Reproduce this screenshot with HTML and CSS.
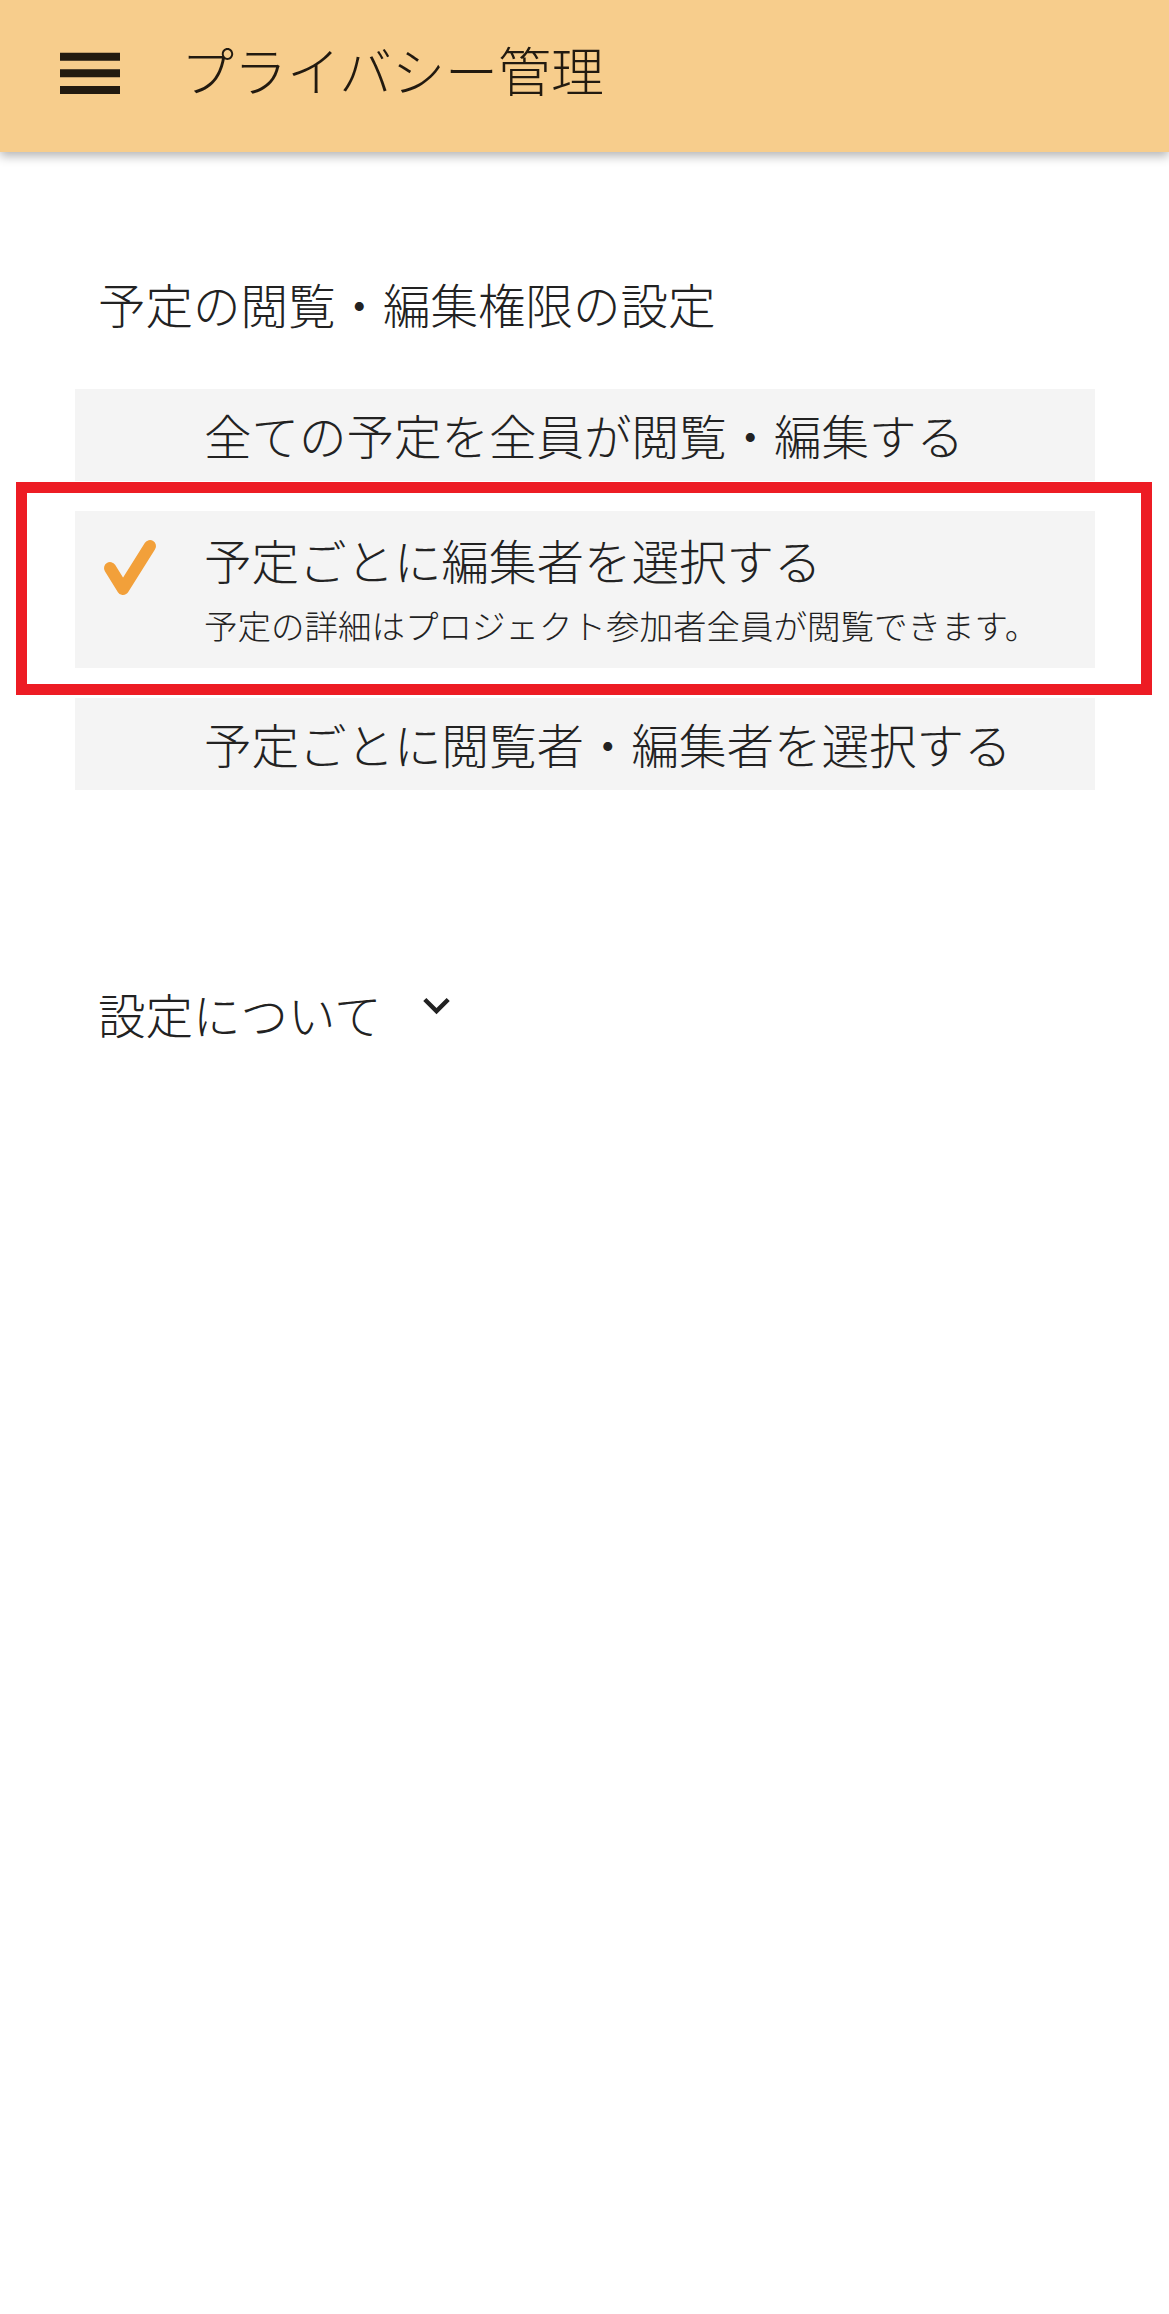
FILE: index.html
```html
<!DOCTYPE html>
<html lang="ja">
<head>
    <meta charset="UTF-8">
    <meta name="viewport" content="width=device-width, initial-scale=1.0">
    <title>プライバシー管理</title>
    <link rel="stylesheet" href="styles.css">
</head>
<body>
    <header class="app-bar">
        <svg class="menu-icon" viewBox="0 0 24 24" aria-hidden="true">
            <path d="M3 18h18v-2.4H3V18zm0-5h18v-2.4H3V13zm0-7.4V8h18V5.6H3z"/>
        </svg>
        <div class="app-title">プライバシー管理</div>
    </header>

    <main class="content">
        <div class="section-title">予定の閲覧・編集権限の設定</div>

        <div class="options">
            <div class="option">
                <div class="option-mark"></div>
                <div class="option-text">
                    <div class="option-label">全ての予定を全員が閲覧・編集する</div>
                </div>
            </div>
            <div class="option option-selected">
                <div class="option-mark">
                    <svg class="check-icon" viewBox="0 0 60 64" aria-hidden="true">
                        <path d="M10 32 L23 53 L50 10"/>
                    </svg>
                </div>
                <div class="option-text">
                    <div class="option-label">予定ごとに編集者を選択する</div>
                    <div class="option-note">予定の詳細はプロジェクト参加者全員が閲覧できます。</div>
                </div>
                <span class="highlight"></span>
            </div>
            <div class="option">
                <div class="option-mark"></div>
                <div class="option-text">
                    <div class="option-label">予定ごとに閲覧者・編集者を選択する</div>
                </div>
            </div>
        </div>

        <div class="about">
            <span class="about-label">設定について</span>
            <svg class="chevron" viewBox="0 0 24 24" aria-hidden="true">
                <path d="M16.59 8.59L12 13.17 7.41 8.59 6 10l6 6 6-6z"/>
            </svg>
        </div>
    </main>
</body>
</html>
```

FILE: styles.css
```css
body {
    margin: 0;
    padding: 0;
    background: #ffffff;
    color: #222222;
    font-family: "Noto Sans CJK JP", "Noto Sans", sans-serif;
    font-weight: 300;
    min-height: 100vh;
}
.app-bar {
    height: 152px;
    background: #f7cd8c;
    display: flex;
    align-items: center;
    box-shadow: 0 4px 10px rgba(0, 0, 0, 0.3);
    position: relative;
}
.menu-icon {
    width: 80px;
    height: 80px;
    margin-left: 50px;
    margin-top: -4px;
    fill: #221a10;
    flex: none;
}
.app-title {
    font-size: 53px;
    line-height: 60px;
    margin-left: 51px;
    margin-bottom: 14px;
    color: #221a10;
}
.content {
    padding: 0 74px 0 75px;
}
.section-title {
    font-size: 47.5px;
    line-height: 56px;
    padding-top: 124px;
    padding-left: 23px;
}
.options {
    margin-top: 57px;
    display: flex;
    flex-direction: column;
    gap: 30px;
}
.option {
    position: relative;
    display: flex;
    align-items: flex-start;
    background: #f4f4f4;
    padding: 18px 0;
}
.option-selected {
    padding: 21px 0 23px;
}
.option-mark {
    width: 129px;
    flex: none;
}
.check-icon {
    display: block;
    width: 60px;
    height: 64px;
    margin-left: 25px;
    margin-top: 4px;
    fill: none;
    stroke: #f2a03a;
    stroke-width: 12;
    stroke-linecap: round;
    stroke-linejoin: round;
}
.option-label {
    font-size: 47.5px;
    line-height: 56px;
}
.option-note {
    font-size: 33.5px;
    line-height: 40px;
    margin-top: 17px;
}
.highlight {
    position: absolute;
    top: -29px;
    bottom: -27px;
    left: -59px;
    right: -57px;
    border: 11px solid #ed1c24;
    pointer-events: none;
}
.about {
    display: flex;
    align-items: flex-start;
    margin-top: 196px;
    padding-left: 23px;
}
.about-label {
    font-size: 47.5px;
    line-height: 56px;
}
.chevron {
    width: 53px;
    height: 53px;
    margin-left: 28px;
    margin-top: -7px;
    fill: #222222;
    flex: none;
}
```
